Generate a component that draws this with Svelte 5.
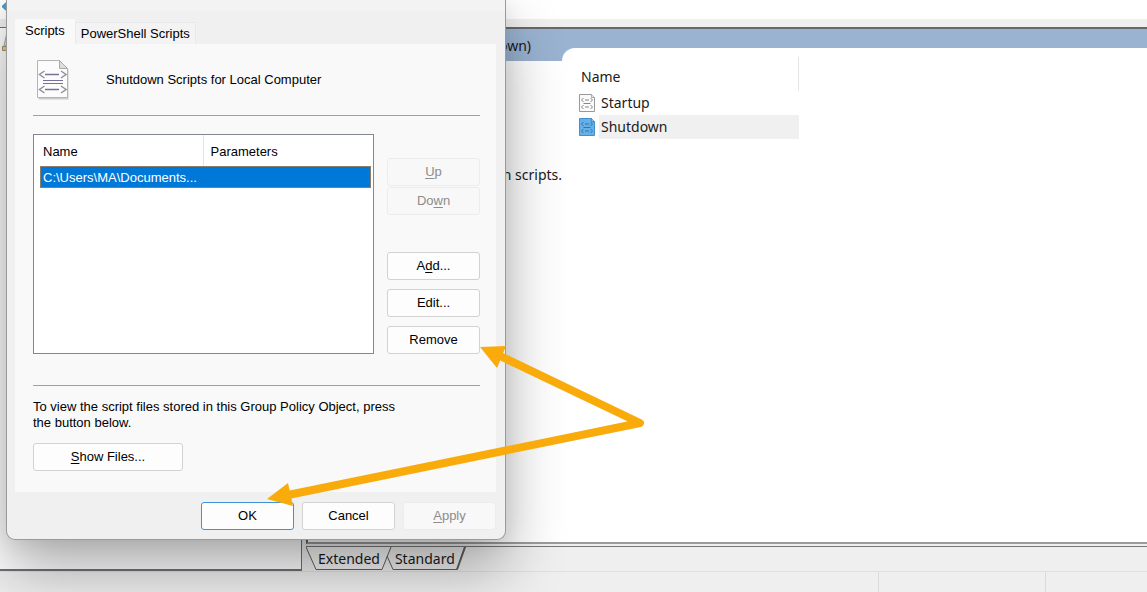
<script>
let scripts = [
    { name: 'Startup', selected: false },
    { name: 'Shutdown', selected: true },
]

let files = [
    { path: 'C:\\Users\\MA\\Documents...', params: '' },
]

let tab = 'scripts'
let view = 'extended'
</script>

<style>
:global(body) {
    margin: 0;
    overflow: hidden;
}

.screen {
    position: relative;
    display: flex;
    flex-direction: column;
    min-height: 100vh;
    overflow: hidden;
    background: #efefef;
    color: #1a1a1a;
    font-family: "Noto Sans", "Open Sans", sans-serif;
    font-size: 14px;
    line-height: 20px;
}

button {
    margin: 0;
    padding: 0;
    font: inherit;
    color: inherit;
}

/* console behind the dialog */
.toolbar {
    box-sizing: border-box;
    height: 27px;
    background: #fff;
    border-bottom: 8px solid #efefef;
}

.toolbar svg {
    display: block;
    width: 14px;
    height: 16px;
}

.panes {
    flex: 1;
    display: flex;
    gap: 4px;
}

.tree {
    box-sizing: border-box;
    width: 302px;
    flex: none;
    border: solid #6f7177;
    border-width: 1px 1px 2px 0;
    background: #fff;
}

.tree svg {
    display: block;
    width: 16px;
    height: 26px;
}

.details {
    flex: 1;
    display: flex;
    flex-direction: column;
    min-width: 0;
}

.result {
    flex: 1;
    display: flex;
    flex-direction: column;
    border-top: 2px solid #686868;
    border-left: 2px solid #606060;
    border-bottom: 2px solid #9c9c9c;
    background: #fff;
}

.band {
    box-sizing: border-box;
    height: 32px;
    padding-top: 7px;
    background: #9ab3d1;
}

.band span {
    display: block;
    width: 223px;
    text-align: right;
}

.columns {
    flex: 1;
    display: flex;
}

.about {
    box-sizing: border-box;
    width: 254px;
    padding-top: 104px;
    text-align: right;
    white-space: nowrap;
}

.list {
    flex: 1;
    margin-top: -13px;
    padding: 9px 0 0 17px;
    border-top-left-radius: 13px;
    background: #fff;
}

.list table {
    width: 220px;
    border-collapse: collapse;
}

.list th {
    height: 34px;
    padding: 6px 2px 0;
    box-sizing: border-box;
    border-right: 1px solid #e5e5e5;
    font-weight: 400;
    text-align: left;
}

.list td {
    height: 24px;
    padding: 0;
}

.item {
    display: flex;
    align-items: center;
    gap: 3px;
}

.item svg {
    width: 17px;
    height: 20px;
}

.item span {
    flex: 1;
    padding: 2px;
}

.item.selected span {
    background: #f0f0f0;
}

.views {
    position: relative;
    display: flex;
    gap: 15px;
    height: 24px;
    margin-top: 2px;
    padding-left: 12px;
    border-top: 1px solid #777;
}

.views svg {
    position: absolute;
    left: 0;
    top: 0;
    width: 162px;
    height: 24px;
}

.views button {
    position: relative;
    border: 0;
    background: none;
}

.status {
    display: flex;
    box-sizing: border-box;
    height: 21px;
    border-top: 1px solid #e0e0e0;
}

.status div {
    flex: 1;
}

.status div + div {
    flex: none;
    box-sizing: border-box;
    width: 167px;
    border-left: 1px solid #dadada;
}

.status div:last-child {
    width: 102px;
}

/* properties dialog */
.dialog {
    position: absolute;
    left: 6px;
    top: 0;
    box-sizing: border-box;
    width: 500px;
    padding: 0 9px 9px 8px;
    border: 1px solid #9a9a9a;
    border-top: 0;
    border-radius: 0 0 9px 9px;
    background: #f0f0f0;
    box-shadow: 0 30px 60px rgba(0, 0, 0, .32), 0 2px 20px rgba(0, 0, 0, .08);
    color: #000;
    font-family: "Liberation Sans", Arial, sans-serif;
    font-size: 13px;
    line-height: 16px;
}

.titlebar {
    height: 11px;
    margin: 0 -9px 0 -8px;
    background: #f3f3f3;
}

.tabs {
    display: flex;
    align-items: flex-end;
    height: 33px;
}

.tabs button {
    height: 22px;
    border: 1px solid #e9e9e9;
    border-bottom: 0;
    background: #f3f3f3;
    padding: 0 5px;
}

.tabs button.active {
    height: 25px;
    padding: 0 9px 2px;
    border-color: #f9f9f9;
    background: #f9f9f9;
}

.page {
    padding: 14px 16px 21px 18px;
    background: #f9f9f9;
}

.heading {
    display: flex;
    align-items: center;
    gap: 34px;
    padding-bottom: 14px;
    border-bottom: 1px solid #a0a0a0;
}

.heading svg {
    width: 39px;
    height: 43px;
}

.heading h1 {
    margin: 0;
    font-size: 13px;
    font-weight: 400;
}

.editor {
    display: flex;
    gap: 13px;
    padding: 18px 0 31px;
    border-bottom: 1px solid #a0a0a0;
}

.files {
    flex: 1;
    box-sizing: border-box;
    height: 220px;
    padding: 0 2px 0 6px;
    border: 1px solid #828790;
    background: #fff;
}

.files table {
    width: 100%;
    border-collapse: collapse;
    table-layout: fixed;
}

.files th {
    box-sizing: border-box;
    height: 31px;
    padding: 2px 3px 0;
    font-weight: 400;
    text-align: left;
}

.files th:first-child {
    width: 163px;
    border-right: 1px solid #e5e5e5;
}

.files th + th {
    padding-left: 7px;
}

.files td {
    box-sizing: border-box;
    height: 22px;
    padding: 1px 3px 0;
    background: #0078d7;
    color: #fff;
    white-space: nowrap;
}

.files tbody tr {
    outline: 1px solid #8c7c6c;
    outline-offset: -1px;
}

.actions {
    display: flex;
    flex-direction: column;
    width: 93px;
    padding-top: 24px;
}

.btn {
    box-sizing: border-box;
    width: 93px;
    height: 28px;
    border: 1px solid #d2d2d2;
    border-radius: 3px;
    background: #fdfdfd;
}

.btn:disabled {
    border-color: #ececec;
    background: #f8f8f8;
    color: #8c8c8c;
}

.btn.default {
    border-color: #3f93da;
}

.btn.wide {
    width: 150px;
}

.btn u {
    text-underline-offset: 2px;
}

.order,
.manage {
    display: flex;
    flex-direction: column;
    gap: 1px;
}

.manage {
    gap: 9px;
    margin-top: 37px;
}

.hint {
    margin: 13px 0 12px;
    max-width: 380px;
}

.footer {
    display: flex;
    justify-content: flex-end;
    gap: 8px;
    padding-top: 10px;
}

.arrows {
    position: absolute;
    left: 260px;
    top: 340px;
    width: 390px;
    height: 170px;
    pointer-events: none;
}
</style>

{#snippet scriptIcon(blue)}
    <svg viewBox="0 0 17 20" aria-hidden="true">
        <path d="M.5 1.500h12l3 3v14H.5z" fill={blue ? '#66b0e8' : '#fafafa'} stroke={blue ? '#438fc9' : '#999'} />
        <path d="M12.500 1.500v3h3" fill={blue ? '#8bc7f2' : '#e4e4e4'} stroke={blue ? '#438fc9' : '#aaa'} />
        <path d="M4.500 5L2.500 7l2 2M11.500 5l2 2-2 2M6 7h4M4.500 10.500h7M4.500 12l-2 2 2 2M11.500 12l2 2-2 2M6 14h4" fill="none" stroke={blue ? '#2a77b5' : '#85858f'} />
    </svg>
{/snippet}

<div class="screen">
    <div class="toolbar">
        <svg viewBox="0 0 14 16" aria-hidden="true">
            <path d="M2 6.500L8 1v11z" fill="#3fa4dc" stroke="#2b7fb4" />
        </svg>
    </div>

    <div class="panes">
        <div class="tree">
            <svg viewBox="0 0 16 26" aria-hidden="true">
                <path d="M7 4h8v14H4z" fill="#dcdcdc" stroke="#aaa" />
                <path d="M2.500 18.500h12v4h-12z" fill="#e2cf9c" stroke="#a8925c" />
            </svg>
        </div>
        <div class="details">
            <div class="result">
                <div class="band"><span>own)</span></div>
                <div class="columns">
                    <div class="about">n scripts.</div>
                    <div class="list">
                        <table>
                            <thead>
                                <tr><th>Name</th></tr>
                            </thead>
                            <tbody>
                                {#each scripts as s}
                                    <tr>
                                        <td>
                                            <div class="item {s.selected ? 'selected' : ''}">
                                                {@render scriptIcon(s.selected)}
                                                <span>{s.name}</span>
                                            </div>
                                        </td>
                                    </tr>
                                {/each}
                            </tbody>
                        </table>
                    </div>
                </div>
            </div>
            <div class="views">
                <svg viewBox="0 0 162 24" aria-hidden="true">
                    <path d="M85 0L76 22.500H10L0 0" fill="#fff" fill-opacity=".3" stroke="#606060" />
                    <path d="M81 9L87 22.500H151L159 0" fill="none" stroke="#606060" />
                    <path d="M151 22.500L159 0" fill="none" stroke="#606060" stroke-width="2" />
                </svg>
                <button on:click={() => { view = 'extended' }}>Extended</button>
                <button on:click={() => { view = 'standard' }}>Standard</button>
            </div>
        </div>
    </div>

    <div class="status">
        <div></div>
        <div></div>
        <div></div>
    </div>

    <div class="dialog" role="dialog" aria-labelledby="heading">
        <div class="titlebar"></div>
        <div class="tabs">
            <button class={tab === 'scripts' ? 'active' : ''} on:click={() => { tab = 'scripts' }}>Scripts</button>
            <button class={tab === 'powershell' ? 'active' : ''} on:click={() => { tab = 'powershell' }}>PowerShell Scripts</button>
        </div>

        <div class="page">
            <div class="heading">
                <svg viewBox="0 0 39 43" aria-hidden="true">
                    <path d="M5.500 3.500h22l8 8v30h-30z" fill="#ccc" />
                    <path d="M4.500 2.500h22l8 8v29h-30z" fill="#fcfcfc" stroke="#b4b4b4" />
                    <path d="M26.500 2.500v8h8z" fill="#ddd" stroke="#aaa" />
                    <path d="M11.500 13l-5 3.500 5 3.500M28 13l5 3.500-5 3.500M11.500 28l-5 3.500 5 3.500M28 28l5 3.500-5 3.500" fill="none" stroke="#91919d" stroke-width="1.500" />
                    <path d="M12 16.500h14M12 31.500h14" stroke="#74729a" stroke-width="1.500" />
                    <path d="M10 22.500h20M10 25.500h20" stroke="#74729a" />
                </svg>
                <h1 id="heading">Shutdown Scripts for Local Computer</h1>
            </div>

            <div class="editor">
                <div class="files">
                    <table>
                        <thead>
                            <tr><th>Name</th><th>Parameters</th></tr>
                        </thead>
                        <tbody>
                            {#each files as f}
                                <tr><td>{f.path}</td><td>{f.params}</td></tr>
                            {/each}
                        </tbody>
                    </table>
                </div>
                <div class="actions">
                    <div class="order">
                        <button class="btn" disabled><u>U</u>p</button>
                        <button class="btn" disabled>Do<u>w</u>n</button>
                    </div>
                    <div class="manage">
                        <button class="btn">A<u>d</u>d...</button>
                        <button class="btn">Edit...</button>
                        <button class="btn">Remove</button>
                    </div>
                </div>
            </div>

            <p class="hint">To view the script files stored in this Group Policy Object, press the button below.</p>
            <button class="btn wide"><u>S</u>how Files...</button>
        </div>

        <div class="footer">
            <button class="btn default">OK</button>
            <button class="btn">Cancel</button>
            <button class="btn" disabled><u>A</u>pply</button>
        </div>
    </div>

    <svg class="arrows" viewBox="260 340 390 170" aria-hidden="true">
        <path d="M498 355L640 423L288 495" fill="none" stroke="#f9ab0c" stroke-width="8" stroke-linecap="round" stroke-linejoin="round" />
        <path d="M480 347l26-1-9 22zM267 499l21-16 5 23z" fill="#f9ab0c" />
    </svg>
</div>
